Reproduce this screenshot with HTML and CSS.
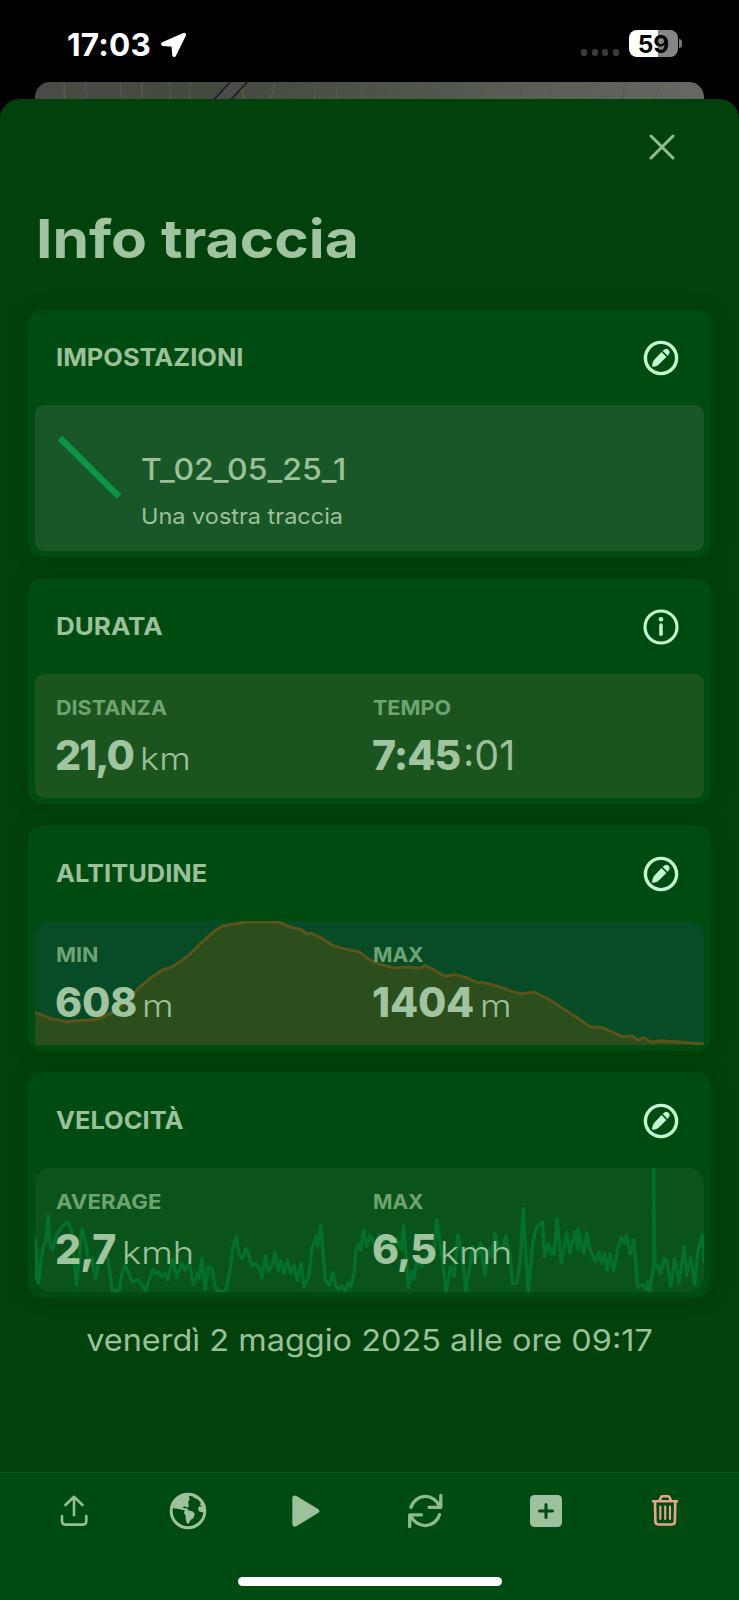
FILE: index.html
```html
<!DOCTYPE html>
<html lang="it">
<head>
<meta charset="utf-8">
<title>Info traccia</title>
<link rel="stylesheet" href="styles.css">
</head>
<body>
<svg class="defs" aria-hidden="true">
  <symbol id="pencil" viewBox="0 0 36 36">
    <circle cx="18" cy="18" r="15.6" fill="none" stroke="currentColor" stroke-width="3.4"/>
    <path fill="currentColor" stroke="currentColor" stroke-width=".5" d="M18.6 12.3 23.2 17 15.3 24.7Q13.6 26.1 9.9 26.6 9.2 26.6 9.3 25.8 9.8 22 11.2 20.1ZM20 10.9 21.1 10Q23.6 8.2 25.6 10.1 27.4 12.3 25.5 14.6L24.6 15.6Z"/>
  </symbol>
</svg>
<div class="screen">
  <header class="status">
    <span class="clock">17:03</span>
    <svg class="arrow" viewBox="0 0 27 26"><path fill="#fff" stroke="#fff" stroke-width="4" stroke-linejoin="round" d="M3 12 24 2.8 14.2 23 13.4 12.7Z"/></svg>
    <span class="dots"><i></i><i></i><i></i><i></i></span>
    <span class="battery">59</span>
    <i class="nub"></i>
  </header>
  <div class="map">
    <svg viewBox="0 0 669 30" width="669" height="30" fill="none">
      <path stroke="#5f6237" d="M29 0 30 30M107 0V30M207 5Q208 15 213 30M240 0 232 30M455 0 448 30M626 0 614 30"/>
      <path stroke="#565b50" d="M50 0 54 30M85 0 87 30M135 0V30M155 0V30M280 0V30M302 0V30M328 0V30M356 0 350 30M410 0V30M487 0 483 30M515 0V30M553 0 548 30M590 0 585 30"/>
      <path stroke="#4b4b4e" stroke-width="12" d="M207.5-4 181.5 24"/>
      <path stroke="#1c1e1f" stroke-width="1.6" d="M199-4 173 24M216-4 190 24"/>
    </svg>
  </div>
  <main class="sheet">
    <div class="close"><svg viewBox="0 0 26 26" width="26" height="26"><path d="M2 2 24 24M24 2 2 24" stroke="#92be93" stroke-width="3" stroke-linecap="round"/></svg></div>
    <h1>Info traccia</h1>

    <section class="card">
      <div class="head first"><h2>IMPOSTAZIONI</h2><svg class="ico"><use href="#pencil"/></svg></div>
      <div class="panel track">
        <svg class="line" viewBox="0 0 64 64"><path d="M3 3 62 61.5" stroke="#0c9447" stroke-width="6.2"/></svg>
        <div class="names"><div class="name">T_02_05_25_1</div><div class="sub">Una vostra traccia</div></div>
      </div>
    </section>

    <section class="card">
      <div class="head"><h2 class="t-dur">DURATA</h2>
        <svg class="ico" viewBox="0 0 36 36"><circle cx="18" cy="18" r="16" fill="none" stroke="currentColor" stroke-width="3.1"/><circle cx="18" cy="10.2" r="2.3" fill="currentColor"/><path d="M18 16V25.2" stroke="currentColor" stroke-width="3.5" stroke-linecap="round"/></svg></div>
      <div class="panel stats dur">
        <div class="stat"><h3>DISTANZA</h3><p><b class="v-dist">21,0</b><span>km</span></p></div>
        <div class="stat"><h3>TEMPO</h3><p><b class="v-time">7:45</b><span class="sec">:01</span></p></div>
      </div>
    </section>

    <section class="card">
      <div class="head"><h2>ALTITUDINE</h2><svg class="ico"><use href="#pencil"/></svg></div>
      <div class="panel stats alt">
        <svg class="chart" viewBox="105 303 2007 372">
          <path fill="#2b4e1c" d="M105 578 130 587 155 597 180 601 200 606 225 602 265 601 295 596 335 579 380 545 415 506 450 475 487 450 510 444 540 425 570 403 595 377 620 354 645 332 670 317 705 312 735 306 835 306 870 321 905 330 920 342 935 340 965 355 1000 377 1040 388 1080 397 1107 418 1125 428 1180 444 1225 441 1262 445 1273 436 1303 450 1332 469 1365 464 1397 472 1430 487 1462 490 1507 503 1535 514 1563 521 1602 516 1647 538 1687 565 1732 593 1769 620 1807 623 1834 635 1867 650 1897 648 1912 660 1932 654 1954 667 1982 662 2047 667 2112 672V675H105Z"/>
          <path fill="none" stroke="#5b541a" stroke-width="9" stroke-linejoin="round" d="M105 578 130 587 155 597 180 601 200 606 225 602 265 601 295 596 335 579 380 545 415 506 450 475 487 450 510 444 540 425 570 403 595 377 620 354 645 332 670 317 705 312 735 306 835 306 870 321 905 330 920 342 935 340 965 355 1000 377 1040 388 1080 397 1107 418 1125 428 1180 444 1225 441 1262 445 1273 436 1303 450 1332 469 1365 464 1397 472 1430 487 1462 490 1507 503 1535 514 1563 521 1602 516 1647 538 1687 565 1732 593 1769 620 1807 623 1834 635 1867 650 1897 648 1912 660 1932 654 1954 667 1982 662 2047 667 2112 672"/>
        </svg>
        <div class="stat"><h3>MIN</h3><p><b class="v-min">608</b><span>m</span></p></div>
        <div class="stat"><h3 class="t-max">MAX</h3><p><b class="v-max">1404</b><span>m</span></p></div>
      </div>
    </section>

    <section class="card">
      <div class="head"><h2>VELOCITÀ</h2><svg class="ico"><use href="#pencil"/></svg></div>
      <div class="panel stats vel">
        <svg class="chart" viewBox="105 84 2007 372">
          <path fill="none" stroke="#04702c" stroke-width="10" stroke-linejoin="round" d="M107 456V300L115 428 130 318 138 305 144 226 150 310 157 330 172 280 185 262 202 246 215 270 222 350 229 436 238 350 246 268 256 300 265 365 275 355 287 415 300 350 318 330 328 385 337 452 358 450 366 400 375 376 385 395 396 425 414 418 437 452 450 410 458 388 466 400 475 396 485 410 495 400 503 420 518 358 530 412 545 370 555 390 568 368 580 434 593 400 598 415 606 354 615 448 625 382 636 385 645 440 655 455 676 455 688 405 698 325 709 292 717 345 728 355 737 325 745 340 755 378 765 370 778 385 786 415 797 346 805 395 815 380 825 338 834 392 843 362 852 400 862 360 872 402 882 375 892 422 903 370 912 440 926 410 936 325 948 288 953 318 962 254 970 350 976 418 987 436 999 398 1007 438 1017 448 1027 438 1035 454 1045 430 1052 440 1062 402 1068 330 1076 312 1082 330 1091 270 1099 318 1110 285 1125 312 1138 285 1149 308 1164 290 1180 325 1190 295 1204 330 1211 256 1225 442 1236 395 1242 418 1252 350 1265 380 1280 350 1290 365 1301 350 1310 238 1320 310 1328 360 1338 455 1352 380 1362 410 1374 285 1387 340 1397 454 1410 380 1418 320 1430 350 1442 310 1454 404 1467 330 1475 350 1485 280 1496 325 1508 330 1517 288 1530 350 1538 430 1550 430 1561 360 1570 206 1577 340 1585 454 1598 310 1610 262 1627 246 1634 350 1645 312 1654 342 1664 318 1663 342 1671 236 1684 368 1700 278 1710 340 1724 275 1734 330 1734 268 1752 340 1760 278 1770 330 1786 365 1797 335 1804 370 1814 342 1821 390 1830 342 1841 392 1854 325 1864 292 1874 310 1879 286 1890 342 1902 298 1913 442 1929 434 1938 448 1944 425 1949 452 1961 375V84L1964 370 1977 384 1982 400 1992 355 2001 366 2012 438 2024 356 2037 428 2052 320 2060 405 2072 352 2084 432 2094 330 2107 284 2112 370"/>
        </svg>
        <div class="stat"><h3 class="t-avg">AVERAGE</h3><p><b class="v-avg">2,7</b><span>kmh</span></p></div>
        <div class="stat"><h3 class="t-max">MAX</h3><p><b class="v-top">6,5</b><span>kmh</span></p></div>
      </div>
    </section>
    <p class="date">venerdì 2 maggio 2025 alle ore 09:17</p>
  </main>
  <footer class="toolbar">
    <nav>
      <svg viewBox="0 0 40 40" fill="none" stroke="#93be94" stroke-width="2.6" stroke-linecap="round" stroke-linejoin="round"><path d="M20 24.2V6.2M11.5 14 20 5.800 28.5 14M8 25V30Q8 33.600 11.600 33.600H28.800Q32.300 33.600 32.300 30V25"/></svg>
      <svg viewBox="0 0 40 40"><circle cx="20" cy="20" r="16.800" fill="none" stroke="#9dc19d" stroke-width="3"/><path fill="#9dc19d" d="M3.500 17Q6 3.500 22 3.500L20.800 6.500 21.800 8 20.200 11 20.800 15.500 19.500 16.500 16 15.300 14.800 17 19.800 17.600 20 19.300 24.500 20.500 26.800 22.500 25.500 27 22.500 29 20.800 32.500H19L17.500 27.500 17.800 25 16 22 16.700 19.300 13 18.500 8 17.500ZM24 3 25.500 6.500 30 8.500 33 11.500 31.800 13.500 34 15.500 31 15.500 30 17.800 31.200 20.500 33.500 21.300 36.500 21 36 13 31 6Z"/></svg>
      <svg viewBox="0 0 40 40"><path fill="#9dc19d" d="M6.300 8Q6.300 3 10.500 5L32 18Q35 20 32 22L10.500 35.200Q6.300 37 6.300 32Z"/></svg>
      <svg viewBox="0 0 40 40" fill="none" stroke="#8cba8e" stroke-width="3.300" stroke-linecap="round" stroke-linejoin="round"><path d="M6 16.300A15 15 0 0 1 34.500 15.300M35.800 4.300V16.300H24M34.500 23.700A15 15 0 0 1 6 24.700M4.700 35.700V23.900H16.500"/></svg>
      <svg viewBox="0 0 40 40"><rect x="4" y="4" width="32" height="32" rx="4.500" fill="#9dc19d"/><path d="M20 13.500V26.500M13.500 20H26.500" stroke="#004b12" stroke-width="3" stroke-linecap="round"/></svg>
      <svg viewBox="0 0 40 40" fill="none" stroke="#e6a68d" stroke-width="2.600" stroke-linecap="round" stroke-linejoin="round"><path d="M8 10.200H32M10 10.500 10.400 30.500Q10.500 33.500 13.500 33.500H26.800Q29.800 33.500 29.900 30.500L30.300 10.500M14.500 9.500 16.200 6Q16.600 5.300 17.500 5.300H23Q23.800 5.300 24.300 6L26 9.500"/><path stroke-width="2.100" d="M15.300 15.500V28M20.200 15.500V28M25 15.500V28"/></svg>
    </nav>
    <i class="home"></i>
  </footer>
</div>
</body>
</html>
```
FILE: styles.css
```css
* { box-sizing: border-box; margin: 0; padding: 0; }
body { background: #000; font-family: Inter, "Open Sans", sans-serif; color: #9bc09a; }
.defs { display: none; }
.screen { width: 739px; height: 1600px; display: flex; flex-direction: column; overflow: hidden; }

.status { height: 82px; flex: none; display: flex; align-items: flex-start; padding: 30px 57px 0 67px; }
.clock { color: #fff; font-weight: 750; font-size: 31.5px; line-height: 29px; letter-spacing: .2px; width: 93px; white-space: nowrap; }
.arrow { width: 27px; height: 26px; margin-top: 2px; }
.dots { display: flex; gap: 4.6px; margin: 19px 10px 0 auto; }
.dots i { width: 6px; height: 7px; border-radius: 2.5px; background: #3b3b3b; }
.battery { width: 49px; height: 27px; border-radius: 8px; background: linear-gradient(90deg, #fff 59%, #858585 59%); color: #000; font-weight: 750; font-size: 24.5px; line-height: 28px; text-align: center; }
.nub { width: 3px; height: 9px; margin: 9px 0 0 1px; border-radius: 0 4px 4px 0; background: #777; }

.map { height: 17px; flex: none; margin: 0 35px; border-radius: 15px 15px 0 0; overflow: hidden; background: linear-gradient(90deg, #484b47, #444a3e 28%, #4d5349 50%, #666863); }
.map svg { display: block; }

.sheet { flex: none; height: 1373px; padding: 0 28px; background: #00410c; border-radius: 20px 20px 0 0; }
.close { display: flex; justify-content: flex-end; padding: 35px 36.5px 0 0; height: 92px; }

/* Wide letterforms: text blocks are stretched from their left edge */
h1, h2, h3, .name, .sub, .stat span { transform-origin: 0 50%; white-space: nowrap; }
h1 { color: #a0c3a0; font-size: 54px; line-height: 67px; font-weight: 700; height: 105px; width: 300px; margin: 14px 0 0 8px; transform: scaleX(1.087); }

.card { background: #004b12; border-radius: 15px; padding: 0 7px 6px; margin-bottom: 21px; box-shadow: 0 0 18px rgba(0, 48, 6, .35); }
.head { height: 96px; display: flex; align-items: center; justify-content: space-between; padding: 1.5px 25px 0 20.5px; }
.head.first { height: 95px; }
h2 { font-size: 24px; font-weight: 650; line-height: 30px; transform: scaleX(1.06); }
.t-dur { transform: scaleX(1.085); }
.ico { width: 36px; height: 36px; color: #c3fad0; }
.panel { height: 124px; border-radius: 9px; position: relative; overflow: hidden; }
.track { height: 146px; background: #1a5728; display: flex; padding: 30px 22px; }
.line { width: 64px; height: 64px; }
.names { padding: 15px 0 0 20px; }
.name { font-size: 30px; font-weight: 550; line-height: 38px; transform: scaleX(1.065); }
.sub { font-size: 22px; line-height: 30px; margin-top: 13px; transform: scaleX(1.067); }

.stats { display: grid; grid-template-columns: 317px 1fr; padding: 22px 0 0 21px; }
.dur { background: #1c5420; }
.alt { background: #074b27; border-radius: 16px 16px 0 0; }
.vel { background: #0a541b; border-radius: 16px; }
.chart { position: absolute; inset: 0; width: 669px; height: 124px; }
.stat { position: relative; }
h3 { font-size: 20.5px; line-height: 24px; font-weight: 650; color: #6fa371; transform: scaleX(1.05); }
.t-avg { transform: scaleX(1.085); }
.t-max { transform: scaleX(1.02); }
.stat p { display: flex; align-items: baseline; line-height: 50px; margin-top: 9.5px; white-space: nowrap; }
.stat b { font-size: 41px; font-weight: 850; color: #a0c3a0; flex: none; margin-left: -1px; }
.v-dist { width: 85px; letter-spacing: -2px; }
.v-time { width: 91px; letter-spacing: -1px; }
.v-min { width: 87px; letter-spacing: -.2px; }
.v-max { width: 108px; letter-spacing: -.2px; }
.v-avg { width: 67px; letter-spacing: -1px; }
.v-top { width: 68px; letter-spacing: -1px; }
.stat span { font-size: 31px; font-weight: 280; transform: scaleX(1.17); }
.stat .sec { font-size: 41px; font-weight: 380; transform: scaleX(.96); }

.date { text-align: center; font-size: 30px; line-height: 43px; white-space: nowrap; transform: scaleX(1.082); }

.toolbar { flex: 1; background: #004b12; border-top: 1px solid #08551d; display: flex; flex-direction: column; align-items: center; }
nav { width: 100%; height: 104px; padding: 18px 0 0 54px; display: grid; grid-template-columns: 113.5px 118px 119.5px 120.5px 119px 40px; }
nav svg { width: 40px; height: 40px; }
.home { width: 264px; height: 9px; border-radius: 5px; background: #fff; }
```
